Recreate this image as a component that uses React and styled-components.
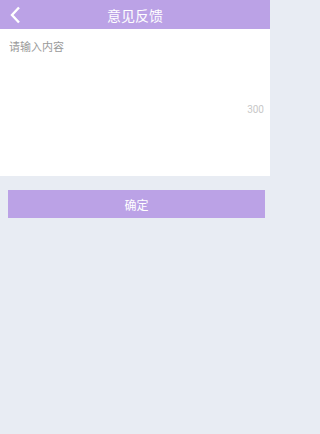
import React from "react";
import styled, { createGlobalStyle } from "styled-components";

const Global = createGlobalStyle`
  html, body { margin: 0; padding: 0; background: #e8ecf3; }
  body { font-family: "Noto Sans CJK SC", "Noto Sans", sans-serif; }
  #root { min-height: 434px; }
`;

const Page = styled.div`
  width: 270px;
  min-height: 434px;
  background: #e8ecf3;
  display: flex;
  flex-direction: column;
`;

const Header = styled.header`
  height: 29px;
  background: #bba2e6;
  display: flex;
  align-items: center;
  justify-content: center;
  position: relative;
`;

const Back = styled.button`
  position: absolute;
  left: 8px;
  top: 5px;
  width: 14px;
  height: 20px;
  padding: 0;
  border: 0;
  background: none;
  display: flex;
  align-items: center;
  justify-content: center;
`;

const Title = styled.h1`
  margin: 0;
  font-size: 14px;
  font-weight: 400;
  color: #fff;
  line-height: 1;
`;

const Editor = styled.div`
  height: 147px;
  background: #fff;
  display: flex;
  flex-direction: column;
  padding: 9px 6px 0 9px;
  box-sizing: border-box;
`;

const Input = styled.textarea`
  border: 0;
  outline: none;
  resize: none;
  padding: 0;
  height: 60px;
  font-family: inherit;
  font-size: 11px;
  line-height: 16px;
  color: #333;
  background: transparent;
  &::placeholder { color: #9a9a9a; }
`;

const Counter = styled.div`
  align-self: flex-end;
  font-family: "Roboto", "Noto Sans", sans-serif;
  font-size: 10px;
  color: #c8c8c8;
  margin-top: 6px;
`;

const Actions = styled.div`
  padding: 14px 5px 0 8px;
`;

const Submit = styled.button`
  width: 100%;
  height: 28px;
  border: 0;
  background: #bba2e6;
  color: #fff;
  font-family: inherit;
  font-size: 12px;
  padding: 0;
`;

export default function App() {
  return (
    <>
      <Global />
      <Page>
        <Header>
          <Back aria-label="返回">
            <svg width="12" height="18" viewBox="0 0 12 18">
              <path d="M10 1.5 L3 9 L10 16.5" fill="none" stroke="#fff" strokeWidth="2.4" />
            </svg>
          </Back>
          <Title>意见反馈</Title>
        </Header>
        <Editor>
          <Input placeholder="请输入内容" />
          <Counter>300</Counter>
        </Editor>
        <Actions>
          <Submit>确定</Submit>
        </Actions>
      </Page>
    </>
  );
}
